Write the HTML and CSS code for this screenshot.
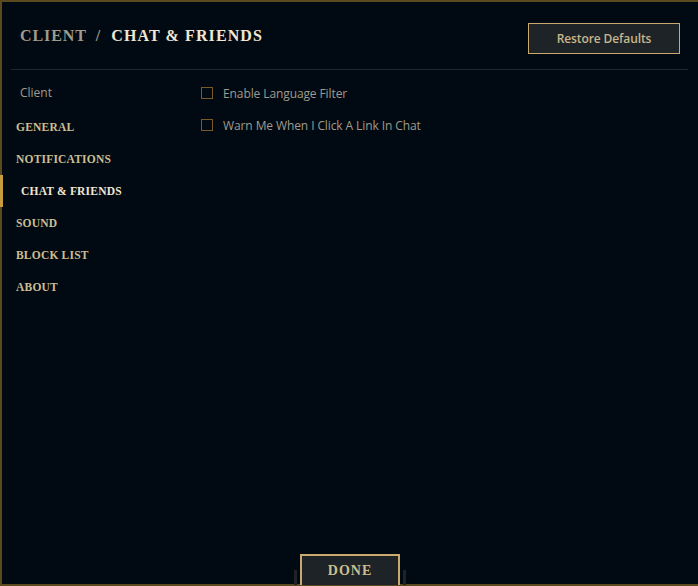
FILE: index.html
```html
<!DOCTYPE html>
<html lang="en">
  <head>
    <meta charset="UTF-8" />
    <title>Settings</title>
    <link rel="stylesheet" href="styles.css">
  </head>
  <body>
    <div class="frame">
      <div class="header">
        <h1 class="title"><span class="crumb">CLIENT</span><span class="slash">/</span>CHAT &amp; FRIENDS</h1>
        <button class="btn-restore">Restore Defaults</button>
      </div>

      <div class="main">
        <nav class="sidebar">
          <div class="group">Client</div>
          <a class="nav-item">GENERAL</a>
          <a class="nav-item">NOTIFICATIONS</a>
          <a class="nav-item active">CHAT &amp; FRIENDS</a>
          <a class="nav-item">SOUND</a>
          <a class="nav-item">BLOCK LIST</a>
          <a class="nav-item">ABOUT</a>
        </nav>

        <div class="options">
          <label class="check"><span class="box"></span>Enable Language Filter</label>
          <label class="check"><span class="box"></span>Warn Me When I Click A Link In Chat</label>
        </div>
      </div>

      <div class="footer">
        <span class="post"></span>
        <button class="btn-done">DONE</button>
        <span class="post"></span>
      </div>
    </div>
  </body>
</html>
```

FILE: styles.css
```css
html, body {
  margin: 0;
  height: 100%;
}
body {
  background: #010a13;
  font-family: "Open Sans", Arial, sans-serif;
  overflow: hidden;
}
.frame {
  box-sizing: border-box;
  height: 586px;
  border: 2px solid #5b4a1e;
  border-right: none;
  display: flex;
  flex-direction: column;
}
.header {
  display: flex;
  justify-content: space-between;
  align-items: center;
  height: 67px;
  margin: 0 10px 0 9px;
  padding: 0 8px 0 9px;
  border-bottom: 1px solid #1e282d;
}
.title {
  margin: 0;
  font-family: "Liberation Serif", serif;
  font-size: 16px;
  font-weight: bold;
  letter-spacing: 1.1px;
  color: #f0e6d2;
}
.title .crumb {
  color: #a09b8c;
  letter-spacing: 0.9px;
}
.title .slash {
  color: #a09b8c;
  margin: 0 10px 0 9px;
}
.btn-restore {
  width: 152px;
  height: 31px;
  margin-top: 5px;
  background: #1e2328;
  border: 1px solid #c8aa6e;
  color: #c8b68c;
  font-family: "Open Sans", Arial, sans-serif;
  font-size: 12px;
  font-weight: 600;
  letter-spacing: -0.1px;
}
.main {
  flex: 1;
  display: flex;
}
.sidebar {
  width: 199px;
  padding-top: 14px;
}
.group {
  padding-left: 18px;
  height: 27px;
  font-size: 12px;
  color: #a09b8c;
}
.nav-item {
  display: flex;
  align-items: center;
  height: 32px;
  padding-left: 14px;
  font-family: "Liberation Serif", serif;
  font-size: 11.5px;
  font-weight: bold;
  letter-spacing: 0.2px;
  color: #cdbe91;
}
.nav-item.active {
  padding-left: 18px;
  margin-left: -2px;
  border-left: 3px solid #c89b3c;
  color: #f0e6d2;
}
.options {
  padding-top: 7px;
}
.check {
  display: flex;
  align-items: center;
  height: 32px;
  font-size: 12px;
  letter-spacing: -0.1px;
  color: #a09b8c;
}
.check .box {
  width: 10px;
  height: 10px;
  border: 1px solid #785a28;
  margin-right: 10px;
}
.footer {
  display: flex;
  justify-content: center;
  align-items: flex-end;
  gap: 3px;
  height: 31px;
  margin-bottom: -1px;
}
.post {
  width: 3px;
  height: 15px;
  background: #1e2328;
}
.btn-done {
  width: 100px;
  height: 31px;
  background: #1e2328;
  border: 2px solid #c8aa6e;
  border-bottom: none;
  color: #cdbe91;
  font-family: "Liberation Serif", serif;
  font-size: 14px;
  font-weight: bold;
  letter-spacing: 1px;
  padding-top: 2px;
}
```
